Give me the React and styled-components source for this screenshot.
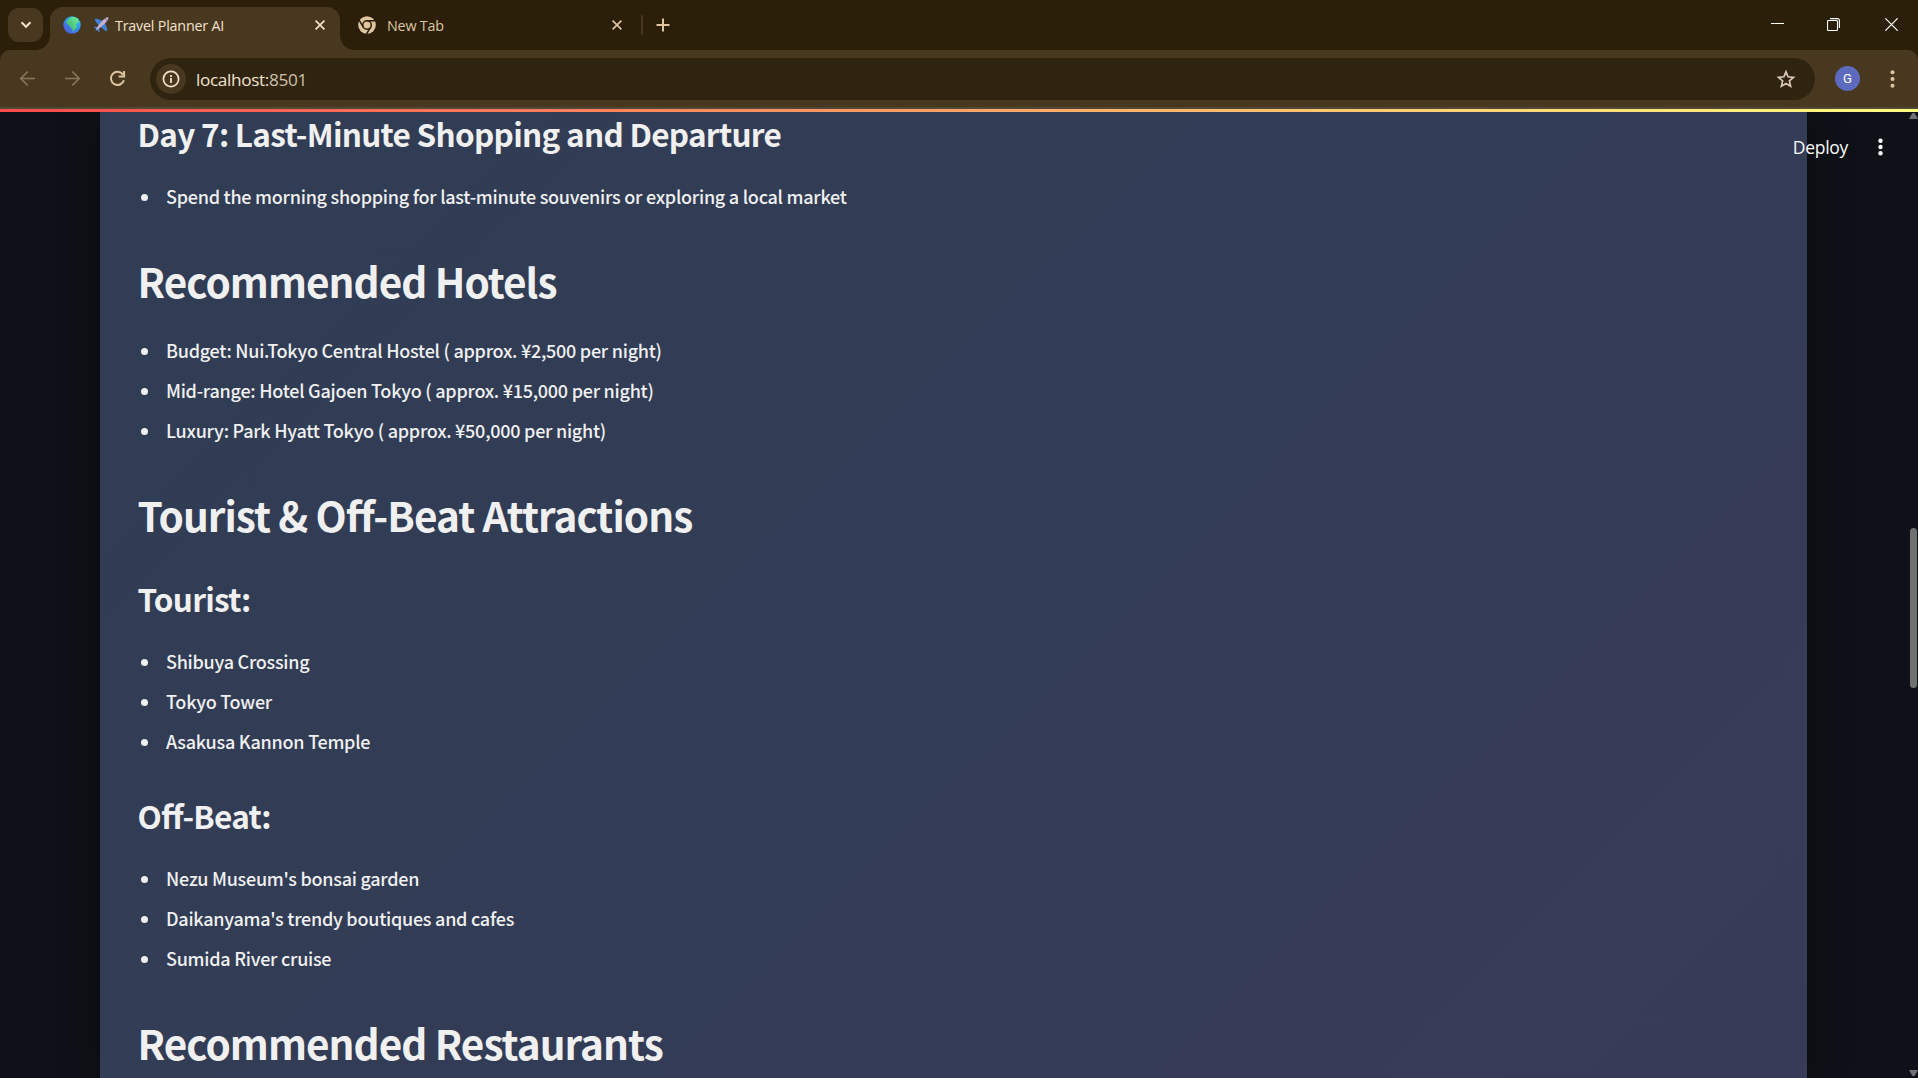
import React from "react";
import styled, { createGlobalStyle } from "styled-components";

const Global = createGlobalStyle`
  * { box-sizing: border-box; }
  html, body { margin: 0; padding: 0; background: #0e1117; overflow: hidden; }
  h1, h2, ul { margin: 0; padding: 0; font-weight: inherit; }
  button { border: 0; padding: 0; background: none; color: inherit; font: inherit; }
  svg { display: block; flex: none; }
`;

const ui = `"Open Sans", "Noto Sans", sans-serif`;
const prose = `"Noto Sans CJK JP", "Noto Sans", sans-serif`;

const Window = styled.div`
  width: 1918px;
  height: 1078px;
  display: flex;
  flex-direction: column;
  overflow: hidden;
  background: #0e1117;
  font-family: ${ui};
`;

const TabStrip = styled.header`
  height: 50px;
  flex: none;
  display: flex;
  background: #2b1f0a;
  color: #dfc5a0;
  padding-left: 8px;
`;

const TabSearch = styled.button`
  width: 35px;
  height: 34px;
  margin: 8px 7px 0 0;
  border-radius: 11px;
  background: #483820;
  color: #f3e0cd;
  display: flex;
  align-items: center;
  justify-content: center;
`;

const Tab = styled.div`
  position: relative;
  width: ${(p) => p.$width}px;
  height: 43px;
  margin-top: 7px;
  padding: 0 ${(p) => p.$right}px 7px ${(p) => p.$left}px;
  display: flex;
  align-items: center;
  border-radius: 13px 13px 0 0;
  background: ${(p) => (p.$active ? "#483820" : "transparent")};
  color: ${(p) => (p.$active ? "#f3e0cd" : "#dfc5a0")};
  ${(p) =>
    p.$active &&
    `&::before, &::after {
      content: "";
      position: absolute;
      bottom: 0;
      width: 14px;
      height: 14px;
    }
    &::before { left: -14px; background: radial-gradient(circle at 0 0, transparent 13.5px, #483820 14px); }
    &::after { right: -14px; background: radial-gradient(circle at 100% 0, transparent 13.5px, #483820 14px); }`}
`;

const TitleIcon = styled.span`
  margin-left: 12px;
`;

const TabTitle = styled.span`
  flex: 1;
  margin-left: ${(p) => p.$gap}px;
  padding-top: 1px;
  font-size: 14.3px;
  line-height: 20px;
  letter-spacing: -0.2px;
  white-space: nowrap;
`;

const TabDivider = styled.i`
  width: 2px;
  height: 20px;
  margin: 15px 13px 0 0;
  border-radius: 1px;
  background: #483820;
`;

const NewTab = styled.button`
  width: 16px;
  height: 50px;
  display: flex;
  align-items: center;
`;

const WindowButtons = styled.div`
  margin-left: auto;
  display: flex;
  align-items: center;
  height: 49px;
  gap: 43px;
  padding-right: 20px;
  color: #fff;
  svg:last-child { margin-left: 2px; }
`;

const ToolbarWrap = styled.div`
  flex: none;
  height: 59px;
  background: #2b1f0a;
`;

const Toolbar = styled.div`
  height: 59px;
  display: flex;
  align-items: center;
  padding: 0 18px 0 19px;
  border-radius: 10px 10px 0 0;
  background: #483820;
  border-bottom: 2px solid #524837;
  color: #dfc5a0;
`;

const NavButton = styled.button`
  width: 17px;
  height: 17px;
  margin-right: ${(p) => p.$gap}px;
  color: ${(p) => (p.$disabled ? "#8b7659" : "#dfc5a0")};
`;

const Omnibox = styled.div`
  width: 1665px;
  height: 42px;
  display: flex;
  align-items: center;
  padding: 0 19px 0 6px;
  border-radius: 21px;
  background: #2f2410;
  color: #f3e0cd;
`;

const SiteInfo = styled.span`
  width: 30px;
  height: 30px;
  border-radius: 50%;
  display: grid;
  place-items: center;
  background: #483820;
`;

const Address = styled.span`
  flex: 1;
  margin-left: 10px;
  padding-top: 2px;
  font-size: 17.2px;
  letter-spacing: -0.35px;
  line-height: 24px;
`;

const Port = styled.span`
  color: #cfc0aa;
`;

const Avatar = styled.span`
  width: 25px;
  height: 25px;
  margin: 0 30px 0 20px;
  border-radius: 50%;
  background: #5c6bc0;
  color: #fff;
  display: grid;
  place-items: center;
  font: 13px/25px Roboto, sans-serif;
`;

const Rainbow = styled.div`
  flex: none;
  height: 3px;
  background: linear-gradient(90deg, #ff4b4b, #fffd80);
`;

const Viewport = styled.main`
  position: relative;
  flex: 1;
  min-height: 0;
  display: flex;
  padding-left: 100px;
  overflow: hidden;
`;

const Card = styled.article`
  width: 1707px;
  padding-left: 37.5px;
  background: linear-gradient(135deg, #303d54 0%, #333c56 55%, #383b58 100%);
  box-shadow: 0 0 40px rgba(0, 0, 0, 0.35);
  color: #f0f0f0;
  font-family: ${prose};
`;

const Title = styled.h1`
  margin-top: ${(p) => p.$top || 38}px;
  font-size: 40.5px;
  line-height: 54px;
  font-weight: 600;
  letter-spacing: -0.0235em;
  font-feature-settings: "liga" 1;
  white-space: nowrap;
`;

const Subtitle = styled.h2`
  margin-top: ${(p) => p.$top || 0}px;
  font-size: 31.5px;
  line-height: 42px;
  font-weight: 600;
  letter-spacing: -0.0225em;
  font-feature-settings: "liga" 1;
  white-space: nowrap;
`;

const List = styled.ul`
  margin-top: 22px;
  list-style: none;
`;

const Item = styled.li`
  display: flex;
  align-items: center;
  height: 40px;
  padding-left: 3.5px;
  font-size: 18px;
  line-height: 40px;
  font-weight: 500;
  letter-spacing: -0.0142em;
  font-feature-settings: "liga" 1;
  white-space: nowrap;
  &::before {
    content: "";
    width: 7px;
    height: 7px;
    margin: 3px 18px 0 0;
    border-radius: 50%;
    background: #f0f0f0;
  }
`;

const AppHeader = styled.div`
  position: absolute;
  top: 17px;
  right: 35px;
  display: flex;
  align-items: center;
  gap: 30px;
  color: #fafafa;
  font-size: 17.5px;
  letter-spacing: -0.3px;
  line-height: 36px;
`;

const Scrollbar = styled.div`
  position: absolute;
  top: 0;
  right: 0;
  bottom: 0;
  width: 9px;
  display: flex;
  flex-direction: column;
`;

const Thumb = styled.i`
  width: 7px;
  height: 160px;
  margin: 409px 0 0 1px;
  border-radius: 4px;
  background: #717174;
`;

const Arrow = styled.i`
  height: 6px;
  margin: ${(p) => (p.$down ? "auto 0 2px" : "1px 0 0")};
  background: #717174;
  clip-path: ${(p) =>
    p.$down
      ? "polygon(0 0, 100% 0, 62% 100%, 38% 100%)"
      : "polygon(38% 0, 62% 0, 100% 100%, 0 100%)"};
`;

const Globe = () => (
  <svg width="18" height="18" viewBox="0 0 18 18">
    <defs>
      <linearGradient id="sea" x1="1" y1="0" x2="0.1" y2="1">
        <stop offset="0" stopColor="#35c8f0" />
        <stop offset="0.5" stopColor="#2f8ff0" />
        <stop offset="1" stopColor="#5a50d0" />
      </linearGradient>
      <linearGradient id="land" x1="1" y1="0" x2="0" y2="1">
        <stop offset="0" stopColor="#6ef59a" />
        <stop offset="1" stopColor="#3aa56a" />
      </linearGradient>
    </defs>
    <circle cx="9" cy="9" r="8.7" fill="url(#sea)" />
    <path d="M4 4.200L6.500 2.300 9.500.8 13 1.400l2.500 1.800-.7 1.500 1.900 1.300-2.500 1.300-1.500 1.400 1.300 1.400-.4 2-2 1.700-1 2-1-.6-.4-2.500-1.800-1.500-1.400-2L4.300 8 3 6.500z" fill="url(#land)" />
  </svg>
);

const Plane = () => (
  <svg width="16" height="16" viewBox="0 0 16 16">
    <path d="M1.400 2.600L3.200 1.600 11.500 4.600 6 9z" fill="#3f7fd8" />
    <path d="M13.400 14.600l1.100-1.800L11.500 4.400 7 9.500z" fill="#3f7fd8" />
    <path d="M.6 10.200l1.300-.8 3.500.8-1.400 2zM5.800 15.400l.9-1.300-.7-3.500-2.200 1.600z" fill="#3f7fd8" />
    <path d="M2.600 13.400c.4-2.400 6-9.600 9.400-12 1.500-1.200 3-1.400 3.300-.8.500.8-.1 2.200-1.200 3.500C11.700 7.200 5 13.200 2.600 13.400z" fill="#c3b0cf" />
    <path d="M12.300 1.900l1.900 1.800" stroke="#6a5a88" strokeWidth="1" />
  </svg>
);

const ChromeMark = () => (
  <svg width="18" height="18" viewBox="0 0 18 18">
    <circle cx="9" cy="9" r="8.800" fill="#dfc5a0" />
    <circle cx="9" cy="9" r="4.300" fill="none" stroke="#2b1f0a" strokeWidth="1.500" />
    <path d="M9 4.700h8.400M5.300 11.200L1.100 4.100M12.700 11.200L8.500 18" stroke="#2b1f0a" strokeWidth="1.500" />
  </svg>
);

const CloseMark = () => (
  <svg width="10" height="10" viewBox="0 0 10 10" stroke="currentColor" strokeWidth="1.700">
    <path d="M.6.6l8.800 8.800M9.400.6L.6 9.400" />
  </svg>
);

const Dots = ({ r, gap, size }) => (
  <svg width="5" height={size} viewBox={`0 0 5 ${size}`} fill="currentColor">
    {[-1, 0, 1].map((n) => (
      <circle key={n} cx="2.500" cy={size / 2 + n * gap} r={r} />
    ))}
  </svg>
);

const Bullets = ({ items }) => (
  <List>
    {items.map((text) => (
      <Item key={text}>{text}</Item>
    ))}
  </List>
);

export default function App() {
  return (
    <Window>
      <Global />
      <TabStrip>
        <TabSearch>
          <svg width="12" height="8" viewBox="0 0 12 8" fill="none" stroke="currentColor" strokeWidth="2">
            <path d="M1.500 1.300L6 5.800l4.500-4.500" />
          </svg>
        </TabSearch>
        <Tab $active $width={290} $left={13} $right={15}>
          <Globe />
          <TitleIcon>
            <Plane />
          </TitleIcon>
          <TabTitle $gap={6}>Travel Planner AI</TabTitle>
          <CloseMark />
        </Tab>
        <Tab $width={301} $left={18} $right={19}>
          <ChromeMark />
          <TabTitle $gap={11}>New Tab</TabTitle>
          <CloseMark />
        </Tab>
        <TabDivider />
        <NewTab>
          <svg width="14" height="14" viewBox="0 0 14 14" stroke="currentColor" strokeWidth="2">
            <path d="M7 .5v13M.5 7h13" />
          </svg>
        </NewTab>
        <WindowButtons>
          <svg width="13" height="13" viewBox="0 0 13 13" stroke="currentColor">
            <path d="M0 5.500h13" />
          </svg>
          <svg width="13" height="13" viewBox="0 0 13 13" fill="none" stroke="currentColor" strokeWidth="1.100">
            <rect x=".5" y="2.500" width="10" height="10" rx="1" />
            <path d="M3 .6h7.400a2 2 0 0 1 2 2V10" />
          </svg>
          <svg width="13" height="13" viewBox="0 0 13 13" stroke="currentColor" strokeWidth="1.200">
            <path d="M.3.3l12.400 12.400M12.700.3L.3 12.700" />
          </svg>
        </WindowButtons>
      </TabStrip>
      <ToolbarWrap>
        <Toolbar>
          <NavButton $disabled $gap={28}>
            <svg width="17" height="17" viewBox="0 0 17 17" fill="none" stroke="currentColor" strokeWidth="1.700">
              <path d="M16 8.500H2M8.800 1.500l-7 7 7 7" />
            </svg>
          </NavButton>
          <NavButton $disabled $gap={28}>
            <svg width="17" height="17" viewBox="0 0 17 17" fill="none" stroke="currentColor" strokeWidth="1.700">
              <path d="M1 8.500h14M8.200 1.500l7 7-7 7" />
            </svg>
          </NavButton>
          <NavButton $gap={24}>
            <svg width="17" height="17" viewBox="0 0 17 17" fill="none" stroke="currentColor" strokeWidth="2">
              <path d="M14.900 10.200A6.600 6.600 0 1 1 14 4.600M15.100 1v5.500H9.600" />
            </svg>
          </NavButton>
          <Omnibox>
            <SiteInfo>
              <svg width="18" height="18" viewBox="0 0 18 18" fill="none" stroke="currentColor">
                <circle cx="9" cy="9" r="7.600" strokeWidth="1.700" />
                <path d="M9 8v5M9 5v1.900" strokeWidth="1.800" />
              </svg>
            </SiteInfo>
            <Address>
              localhost:<Port>8501</Port>
            </Address>
            <svg width="20" height="20" viewBox="0 0 20 20" fill="none" stroke="#d9c6b8" strokeWidth="1.700">
              <path d="M10 2.800l2.100 5 5.400.5-4.100 3.600 1.200 5.300-4.600-2.800-4.600 2.800 1.200-5.300-4.100-3.600 5.400-.5z" />
            </svg>
          </Omnibox>
          <Avatar>G</Avatar>
          <Dots r={2} gap={6.8} size={20} />
        </Toolbar>
      </ToolbarWrap>
      <Rainbow />
      <Viewport>
        <Card>
          <Subtitle>Day 7: Last-Minute Shopping and Departure</Subtitle>
          <Bullets items={["Spend the morning shopping for last-minute souvenirs or exploring a local market"]} />
          <Title>Recommended Hotels</Title>
          <Bullets
            items={[
              "Budget: Nui.Tokyo Central Hostel ( approx. ¥2,500 per night)",
              "Mid-range: Hotel Gajoen Tokyo ( approx. ¥15,000 per night)",
              "Luxury: Park Hyatt Tokyo ( approx. ¥50,000 per night)",
            ]}
          />
          <Title>Tourist &amp; Off-Beat Attractions</Title>
          <Subtitle $top={35}>Tourist:</Subtitle>
          <Bullets items={["Shibuya Crossing", "Tokyo Tower", "Asakusa Kannon Temple"]} />
          <Subtitle $top={33}>Off-Beat:</Subtitle>
          <Bullets
            items={["Nezu Museum's bonsai garden", "Daikanyama's trendy boutiques and cafes", "Sumida River cruise"]}
          />
          <Title $top={37.5}>Recommended Restaurants</Title>
        </Card>
        <AppHeader>
          <span>Deploy</span>
          <Dots r={2.2} gap={6.3} size={20} />
        </AppHeader>
        <Scrollbar>
          <Arrow />
          <Thumb />
          <Arrow $down />
        </Scrollbar>
      </Viewport>
    </Window>
  );
}
